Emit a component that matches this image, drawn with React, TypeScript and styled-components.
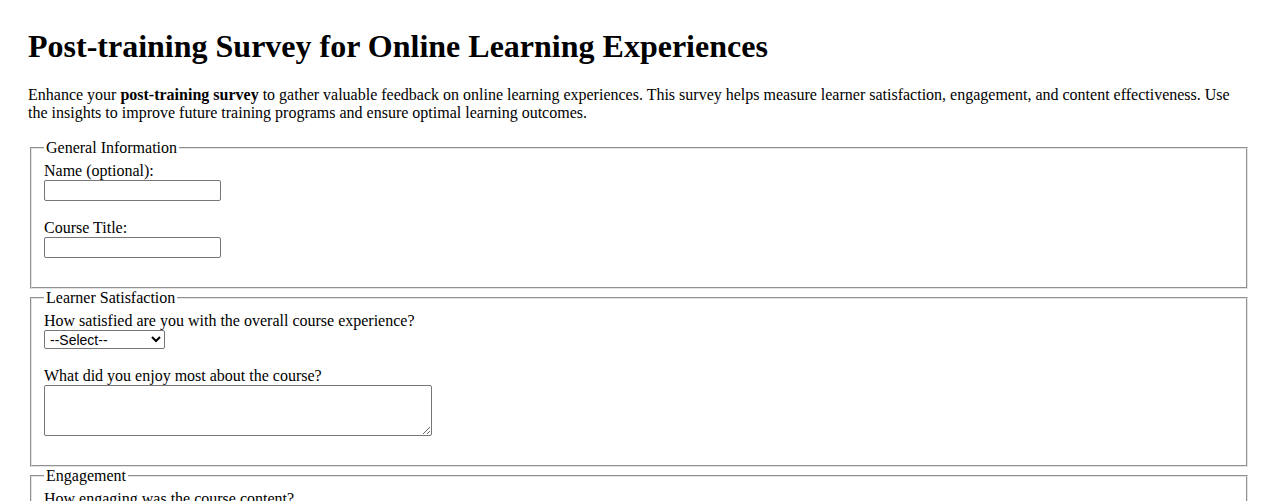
import React from "react";
import styled, { createGlobalStyle } from "styled-components";

const GlobalStyle = createGlobalStyle`
  html, body {
    margin: 0;
    padding: 0;
    background: #ffffff;
  }
  body {
    font-family: "Liberation Serif", "Times New Roman", serif;
    font-size: 16px;
    color: #000000;
  }
`;

const Page = styled.main`
  padding: 28px 28px 40px;
`;

const Title = styled.h1`
  margin: 0 0 21px;
  font-size: 32px;
  font-weight: bold;
  line-height: 37px;
`;

const Intro = styled.p`
  margin: 0 0 16px;
  line-height: 18.4px;

  strong {
    font-weight: bold;
  }
`;

const Form = styled.form`
  display: flex;
  flex-direction: column;
`;

const Section = styled.fieldset`
  margin: 0 2px;
  padding: 4.6px 12px 11px;
  border: 2px groove #e4e4e4;
  min-width: 0;
`;

const Legend = styled.legend`
  padding: 0 2px;
  line-height: 18.4px;
`;

const Field = styled.div`
  display: flex;
  flex-direction: column;
  align-items: flex-start;
  margin-bottom: 18px;
`;

const Label = styled.label`
  line-height: 18px;
`;

const TextInput = styled.input`
  box-sizing: border-box;
  width: 177px;
  height: 21px;
  margin: 0;
  padding: 1px 2px;
  border: 1px solid #767676;
  border-radius: 2px;
  font-family: "Liberation Sans", Arial, sans-serif;
  font-size: 13.333px;
  background: #ffffff;
`;

const Select = styled.select`
  box-sizing: border-box;
  width: 121px;
  height: 19px;
  margin: 0;
  padding: 0 0 0 1px;
  border: 1px solid #767676;
  border-radius: 2px;
  font-family: "Liberation Sans", Arial, sans-serif;
  font-size: 14px;
  color: #000000;
  background: #ffffff;
`;

const TextArea = styled.textarea`
  box-sizing: border-box;
  width: 388px;
  height: 51px;
  margin: 0;
  padding: 2px;
  border: 1px solid #767676;
  border-radius: 2px;
  font-family: "Liberation Mono", monospace;
  font-size: 13.333px;
  background: #ffffff;
`;

type Option = { value: string; label: string };

const satisfaction: Option[] = [
  { value: "", label: "--Select--" },
  { value: "5", label: "Very satisfied" },
  { value: "4", label: "Satisfied" },
  { value: "3", label: "Neutral" },
  { value: "2", label: "Dissatisfied" },
  { value: "1", label: "Very dissatisfied" },
];

const engagement: Option[] = [
  { value: "", label: "--Select--" },
  { value: "5", label: "Very engaging" },
  { value: "4", label: "Engaging" },
  { value: "3", label: "Somewhat engaging" },
  { value: "2", label: "Not very engaging" },
  { value: "1", label: "Not engaging at all" },
];

const effectiveness: Option[] = [
  { value: "", label: "--Select--" },
  { value: "5", label: "Excellent" },
  { value: "4", label: "Good" },
  { value: "3", label: "Average" },
  { value: "2", label: "Poor" },
  { value: "1", label: "Very poor" },
];

function Choice({ id, label, options }: { id: string; label: string; options: Option[] }) {
  return (
    <Field>
      <Label htmlFor={id}>{label}</Label>
      <Select id={id} name={id} defaultValue="">
        {options.map((o) => (
          <option key={o.value} value={o.value}>
            {o.label}
          </option>
        ))}
      </Select>
    </Field>
  );
}

function Text({ id, label }: { id: string; label: string }) {
  return (
    <Field>
      <Label htmlFor={id}>{label}</Label>
      <TextInput id={id} name={id} type="text" />
    </Field>
  );
}

function LongText({ id, label }: { id: string; label: string }) {
  return (
    <Field>
      <Label htmlFor={id}>{label}</Label>
      <TextArea id={id} name={id} rows={3} cols={50} />
    </Field>
  );
}

export default function App() {
  return (
    <>
      <GlobalStyle />
      <Page>
        <Title>Post-training Survey for Online Learning Experiences</Title>
        <Intro>
          Enhance your <strong>post-training survey</strong> to gather valuable feedback on online
          learning experiences. This survey helps measure learner satisfaction, engagement, and
          content effectiveness. Use the insights to improve future training programs and ensure
          optimal learning outcomes.
        </Intro>
        <Form>
          <Section>
            <Legend>General Information</Legend>
            <Text id="name" label="Name (optional):" />
            <Text id="course" label="Course Title:" />
          </Section>
          <Section>
            <Legend>Learner Satisfaction</Legend>
            <Choice
              id="satisfaction"
              label="How satisfied are you with the overall course experience?"
              options={satisfaction}
            />
            <LongText id="enjoyed" label="What did you enjoy most about the course?" />
          </Section>
          <Section>
            <Legend>Engagement</Legend>
            <Choice id="engagement" label="How engaging was the course content?" options={engagement} />
            <LongText id="engagement-notes" label="What could make the course more engaging?" />
          </Section>
          <Section>
            <Legend>Content Effectiveness</Legend>
            <Choice
              id="effectiveness"
              label="How effective was the content in meeting the learning objectives?"
              options={effectiveness}
            />
            <LongText id="improvements" label="What improvements would you suggest?" />
          </Section>
        </Form>
      </Page>
    </>
  );
}
